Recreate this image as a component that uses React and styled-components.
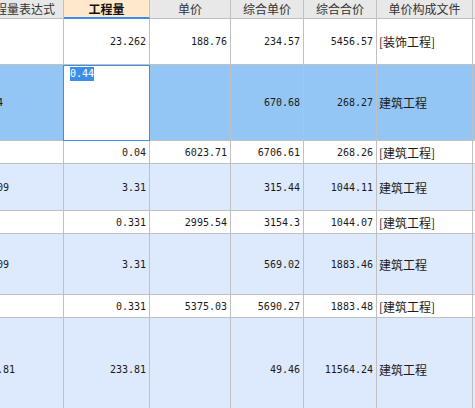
import React from 'react';
import styled, { createGlobalStyle } from 'styled-components';

const GlobalStyle = createGlobalStyle`
  body {
    margin: 0;
    background: #fff;
    font-family: "Noto Sans CJK SC", sans-serif;
  }
`;

// 表格列宽（含右边框），第一列被横向滚动遮住了一部分
const COLS = '89px 86px 81px 73px 73px 96px 80px';

const tones = {
  white: '#ffffff',
  sel: '#93c6f5',
  light: '#dde9fc',
};

const Viewport = styled.div`
  width: 475px;
  height: 408px;
  overflow: hidden;
`;

const Sheet = styled.div`
  margin-left: -25px;
  width: 578px;
`;

const Row = styled.div`
  display: grid;
  grid-template-columns: ${COLS};
  height: ${(p) => p.$h}px;
  background: ${(p) => tones[p.$tone] || '#fff'};
`;

const HeadCell = styled.div`
  box-sizing: border-box;
  border-right: 1px solid #c0c0c0;
  border-bottom: ${(p) => (p.$active ? '2px solid #3d8ee8' : '1px solid #c0c0c0')};
  background: ${(p) => (p.$active ? '#ffe8cc' : '#e8e8e8')};
  color: ${(p) => (p.$active ? '#111' : '#333')};
  font-weight: ${(p) => (p.$active ? 700 : 400)};
  font-size: 12px;
  line-height: 1;
  display: flex;
  align-items: center;
  justify-content: center;
  white-space: nowrap;
  overflow: hidden;
`;

const Cell = styled.div`
  position: relative;
  box-sizing: border-box;
  border-right: 1px solid #c0c0c0;
  border-bottom: 1px solid #c0c0c0;
  display: flex;
  align-items: center;
  justify-content: ${(p) => (p.$align === 'right' ? 'flex-end' : 'flex-start')};
  padding: ${(p) => (p.$align === 'right' ? '0 3px 0 0' : `0 0 0 ${p.$pad || 2}px`)};
  font-family: ${(p) => (p.$mono ? '"DejaVu Sans Mono", monospace' : '"Noto Sans CJK SC", sans-serif')};
  font-size: ${(p) => (p.$mono ? 10 : 12)}px;
  color: #1a1a1a;
  white-space: nowrap;
  overflow: ${(p) => (p.$editing ? 'visible' : 'hidden')};
`;

const Editor = styled.div`
  position: absolute;
  top: 0;
  left: -1px;
  right: -1px;
  bottom: -1px;
  box-sizing: border-box;
  border: 1px solid #3d8ee8;
  background: #fff;
  padding: 1px 0 0 6px;
  z-index: 1;
`;

const Selected = styled.span`
  display: inline-block;
  background: #3d8ee8;
  color: #fff;
  font: 10px/14px "DejaVu Sans Mono", monospace;
`;

const headers = ['工程量表达式', '工程量', '单价', '综合单价', '综合合价', '单价构成文件', ''];

const rows = [
  { h: 46, tone: 'white', expr: '', qty: '23.262', price: '188.76', up: '234.57', total: '5456.57', file: '[装饰工程]' },
  { h: 76, tone: 'sel', expr: '0.44', qty: '0.44', price: '', up: '670.68', total: '268.27', file: '建筑工程', editing: true },
  { h: 23, tone: 'white', expr: '', qty: '0.04', price: '6023.71', up: '6706.61', total: '268.26', file: '[建筑工程]' },
  { h: 47, tone: 'light', expr: '3.309', qty: '3.31', price: '', up: '315.44', total: '1044.11', file: '建筑工程' },
  { h: 23, tone: 'white', expr: '', qty: '0.331', price: '2995.54', up: '3154.3', total: '1044.07', file: '[建筑工程]' },
  { h: 61, tone: 'light', expr: '3.309', qty: '3.31', price: '', up: '569.02', total: '1883.46', file: '建筑工程' },
  { h: 23, tone: 'white', expr: '', qty: '0.331', price: '5375.03', up: '5690.27', total: '1883.48', file: '[建筑工程]' },
  { h: 103, tone: 'light', expr: '233.81', qty: '233.81', price: '', up: '49.46', total: '11564.24', file: '建筑工程' },
];

function App() {
  return (
    <>
      <GlobalStyle />
      <Viewport>
        <Sheet>
          <Row $h={19} $tone="white">
            {headers.map((h, i) => (
              <HeadCell key={i} $active={i === 1}>{h}</HeadCell>
            ))}
          </Row>
          {rows.map((r, i) => (
            <Row key={i} $h={r.h} $tone={r.tone}>
              <Cell $mono $pad={4}>{r.expr}</Cell>
              <Cell $mono $align="right" $editing={r.editing}>
                {r.editing ? (
                  <Editor>
                    <Selected>{r.qty}</Selected>
                  </Editor>
                ) : (
                  r.qty
                )}
              </Cell>
              <Cell $mono $align="right">{r.price}</Cell>
              <Cell $mono $align="right">{r.up}</Cell>
              <Cell $mono $align="right">{r.total}</Cell>
              <Cell>{r.file}</Cell>
              <Cell />
            </Row>
          ))}
        </Sheet>
      </Viewport>
    </>
  );
}

export default App;
